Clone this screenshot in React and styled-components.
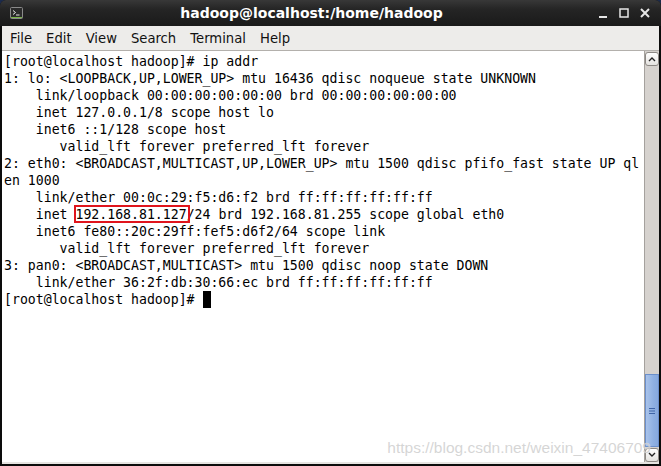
import React from "react";
import styled, { createGlobalStyle } from "styled-components";

const GlobalStyle = createGlobalStyle`
  html, body { margin: 0; padding: 0; background: #1b2a4c; overflow: hidden; }
  #root { width: 661px; height: 466px; }
`;

const Window = styled.div`
  position: relative;
  width: 661px;
  height: 466px;
  display: flex;
  flex-direction: column;
  background: #0c0c0c;
  border-radius: 6px 6px 0 0;
  overflow: hidden;
`;

const TitleBar = styled.div`
  height: 26px;
  flex: none;
  display: flex;
  align-items: center;
  padding: 0 10px 0 10px;
  background: linear-gradient(#383838 0, #252525 35%, #1a1a1a 100%);
  color: #fff;
  font-family: "DejaVu Sans", sans-serif;
  font-weight: bold;
  font-size: 14px;
`;

const TitleIcon = styled.div`
  width: 13px;
  height: 12px;
  flex: none;
  display: flex;
`;

const TitleText = styled.div`
  flex: 1;
  text-align: center;
  padding-left: 2px;
`;

const WinButtons = styled.div`
  display: flex;
  align-items: center;
  gap: 9px;
  flex: none;
`;

const Body = styled.div`
  flex: 1;
  display: flex;
  flex-direction: column;
  margin: 0 2px 2px 2px;
  background: #ebeae8;
`;

const MenuBar = styled.div`
  height: 24px;
  flex: none;
  display: flex;
  align-items: center;
  padding-left: 1px;
  background: #edecea;
  border-bottom: 1px solid #b3b0ac;
  font-family: "DejaVu Sans", sans-serif;
  font-size: 13.2px;
  color: #111;
`;

const MenuItem = styled.span`
  padding: 0 7px 0 7px;
`;

const Content = styled.div`
  height: 411px;
  flex: none;
  display: flex;
`;

const Terminal = styled.div`
  flex: 1;
  background: #fff;
  padding: 2px 0 0 2px;
  font-family: "DejaVu Sans Mono", monospace;
  font-size: 13.2px;
  line-height: 17px;
  color: #000;
  white-space: pre;
  overflow: hidden;
`;

const Line = styled.div`
  height: 17px;
`;

const Boxed = styled.span`
  position: relative;
  &::after {
    content: "";
    position: absolute;
    left: -1px;
    right: -3px;
    top: -2px;
    bottom: -1px;
    border: 2px solid #e0141c;
  }
`;

const Cursor = styled.span`
  display: inline-block;
  width: 8px;
  height: 17px;
  background: #000;
  vertical-align: top;
`;

const Scrollbar = styled.div`
  width: 15px;
  flex: none;
  display: flex;
  flex-direction: column;
  background: #d6d2ce;
  border-left: 1px solid #a5a19d;
  box-sizing: border-box;
`;

const ScrollButton = styled.div`
  height: 14px;
  flex: none;
  margin: 1px 0 0 0;
  background: linear-gradient(#ffffff, #e4e2df);
  border: 1px solid #8c8884;
  border-radius: 3px;
  display: flex;
  align-items: center;
  justify-content: center;
  box-sizing: border-box;
`;

const Track = styled.div`
  flex: 1;
  display: flex;
  flex-direction: column;
  justify-content: flex-end;
`;

const Thumb = styled.div`
  height: 73px;
  background: linear-gradient(90deg, #a9c3ea, #8fb0e2 60%, #86a8de);
  border: 1px solid #6b8fcb;
  box-sizing: border-box;
  display: flex;
  align-items: center;
  justify-content: center;
`;

const BottomStrip = styled.div`
  height: 2px;
  flex: none;
  background: #e6e4e1;
`;

const Watermark = styled.div`
  position: absolute;
  right: 10px;
  bottom: 9px;
  font-family: "Liberation Sans", Arial, sans-serif;
  font-size: 15.5px;
  color: rgba(200, 200, 200, 0.75);
  text-shadow: 0 0 1px rgba(255, 255, 255, 0.6);
  pointer-events: none;
`;

const lines = [
  "[root@localhost hadoop]# ip addr",
  "1: lo: <LOOPBACK,UP,LOWER_UP> mtu 16436 qdisc noqueue state UNKNOWN",
  "    link/loopback 00:00:00:00:00:00 brd 00:00:00:00:00:00",
  "    inet 127.0.0.1/8 scope host lo",
  "    inet6 ::1/128 scope host",
  "       valid_lft forever preferred_lft forever",
  "2: eth0: <BROADCAST,MULTICAST,UP,LOWER_UP> mtu 1500 qdisc pfifo_fast state UP ql",
  "en 1000",
  "    link/ether 00:0c:29:f5:d6:f2 brd ff:ff:ff:ff:ff:ff",
  null,
  "    inet6 fe80::20c:29ff:fef5:d6f2/64 scope link",
  "       valid_lft forever preferred_lft forever",
  "3: pan0: <BROADCAST,MULTICAST> mtu 1500 qdisc noop state DOWN",
  "    link/ether 36:2f:db:30:66:ec brd ff:ff:ff:ff:ff:ff",
];

export default function App() {
  return (
    <>
      <GlobalStyle />
      <Window>
        <TitleBar>
          <TitleIcon>
            <svg width="13" height="12" viewBox="0 0 13 12">
              <rect x="0.5" y="0.5" width="12" height="11" rx="1" fill="#2b2b2b" stroke="#8a8a8a" />
              <path d="M3 3.5 L5.5 5.5 L3 7.5" stroke="#e8e8e8" strokeWidth="1" fill="none" />
              <path d="M6 8 H9.5" stroke="#e8e8e8" strokeWidth="1" />
              <rect x="1" y="10" width="11" height="1" fill="#7ab648" />
            </svg>
          </TitleIcon>
          <TitleText>hadoop@localhost:/home/hadoop</TitleText>
          <WinButtons>
            <svg width="11" height="12" viewBox="0 0 11 12">
              <rect x="1" y="9" width="8" height="2" fill="#e6e6e6" />
            </svg>
            <svg width="12" height="12" viewBox="0 0 12 12">
              <rect x="2" y="2" width="8" height="8" fill="none" stroke="#e6e6e6" strokeWidth="1.5" />
            </svg>
            <svg width="12" height="12" viewBox="0 0 12 12">
              <path d="M2 2 L10 10 M10 2 L2 10" stroke="#e6e6e6" strokeWidth="2" />
            </svg>
          </WinButtons>
        </TitleBar>
        <Body>
          <MenuBar>
            <MenuItem>File</MenuItem>
            <MenuItem>Edit</MenuItem>
            <MenuItem>View</MenuItem>
            <MenuItem>Search</MenuItem>
            <MenuItem>Terminal</MenuItem>
            <MenuItem>Help</MenuItem>
          </MenuBar>
          <Content>
            <Terminal>
              {lines.map((l, i) =>
                l === null ? (
                  <Line key={i}>
                    {"    inet "}
                    <Boxed>192.168.81.127</Boxed>
                    {"/24 brd 192.168.81.255 scope global eth0"}
                  </Line>
                ) : (
                  <Line key={i}>{l}</Line>
                )
              )}
              <Line>
                {"[root@localhost hadoop]# "}
                <Cursor />
              </Line>
            </Terminal>
            <Scrollbar>
              <ScrollButton>
                <svg width="8" height="6" viewBox="0 0 8 6">
                  <path d="M1 5 L4 2 L7 5" stroke="#222" strokeWidth="1.4" fill="none" />
                </svg>
              </ScrollButton>
              <Track>
                <Thumb>
                  <svg width="6" height="8" viewBox="0 0 6 8">
                    <path d="M0 1.5 H6 M0 4 H6 M0 6.5 H6" stroke="#3f64a6" strokeWidth="1" />
                  </svg>
                </Thumb>
              </Track>
              <ScrollButton>
                <svg width="8" height="6" viewBox="0 0 8 6">
                  <path d="M1 1 L4 4 L7 1" stroke="#222" strokeWidth="1.4" fill="none" />
                </svg>
              </ScrollButton>
            </Scrollbar>
          </Content>
          <BottomStrip />
        </Body>
        <Watermark>https://blog.csdn.net/weixin_47406709</Watermark>
      </Window>
    </>
  );
}
